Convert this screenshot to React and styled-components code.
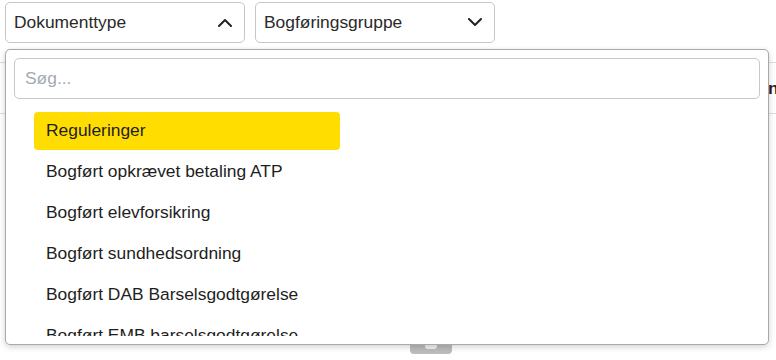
import React from "react";
import styled, { createGlobalStyle } from "styled-components";

const GlobalStyle = createGlobalStyle`
  body {
    margin: 0;
    background: #fff;
    font-family: "Liberation Sans", Arial, sans-serif;
    color: #222;
  }
`;

const Page = styled.div`
  position: relative;
  width: 776px;
  height: 360px;
  overflow: hidden;
`;

const Toolbar = styled.div`
  display: flex;
  gap: 10px;
  padding: 2px 5px 0;
`;

const Select = styled.div`
  box-sizing: border-box;
  width: 240px;
  height: 41px;
  border: 1px solid #c6c6c6;
  border-radius: 5px;
  display: flex;
  align-items: center;
  justify-content: space-between;
  padding: 0 12px 0 8px;
  font-size: 17.4px;
  color: #2a2a2a;
`;

const HeaderRow = styled.div`
  margin-top: 19px;
  height: 50px;
  border-top: 1px solid #dcdcdc;
  border-bottom: 1px solid #dcdcdc;
  display: flex;
  align-items: center;
  padding-left: 768px;
  font-size: 17.4px;
  font-weight: bold;
  white-space: nowrap;
`;

const ButtonRow = styled.div`
  margin-top: 197px;
  padding-left: 410px;
`;

const GreyButton = styled.div`
  width: 42px;
  height: 43px;
  background: #bcbcbc;
  border-radius: 4px;
  display: flex;
  align-items: flex-end;
  justify-content: center;
  padding-bottom: 5px;
  box-sizing: border-box;
`;

const Notch = styled.div`
  width: 12px;
  height: 10px;
  background: #f2f2f2;
  border-radius: 0 0 3px 3px;
`;

const Dropdown = styled.div`
  position: absolute;
  top: 49px;
  left: 5px;
  width: 764px;
  height: 296px;
  box-sizing: border-box;
  border: 1px solid #a9a9a9;
  border-radius: 5px;
  background: #fff;
  padding: 8px;
  box-shadow: 0 2px 6px rgba(0, 0, 0, 0.18);
`;

const Search = styled.input`
  box-sizing: border-box;
  width: 100%;
  height: 41px;
  border: 1px solid #c8c8c8;
  border-radius: 5px;
  padding: 0 10px 1px;
  font-family: inherit;
  font-size: 17.4px;
  color: #222;
  outline: none;
  &::placeholder {
    color: #a3aab6;
  }
`;

const List = styled.div`
  margin-top: 13px;
  padding-left: 20px;
  height: 224px;
  overflow: hidden;
`;

const Item = styled.div`
  box-sizing: border-box;
  width: 306px;
  height: 38px;
  margin-bottom: 3.2px;
  padding: 0 0 2px 12px;
  display: flex;
  align-items: center;
  border-radius: 4px;
  font-size: 17.4px;
  color: #1e1e1e;
  white-space: nowrap;
  background: ${(p) => (p.$active ? "#ffdd00" : "transparent")};
`;

const Chevron = ({ up }) => (
  <svg width="14" height="9" viewBox="0 0 14 9">
    <polyline
      points={up ? "1,8 7,2 13,8" : "1,1 7,7 13,1"}
      fill="none"
      stroke="#222"
      strokeWidth="2"
      strokeLinecap="round"
      strokeLinejoin="round"
    />
  </svg>
);

const items = [
  "Reguleringer",
  "Bogført opkrævet betaling ATP",
  "Bogført elevforsikring",
  "Bogført sundhedsordning",
  "Bogført DAB Barselsgodtgørelse",
  "Bogført EMB barselsgodtgørelse",
];

export default function App() {
  return (
    <>
      <GlobalStyle />
      <Page>
        <Toolbar>
          <Select>
            Dokumenttype
            <Chevron up />
          </Select>
          <Select>
            Bogføringsgruppe
            <Chevron />
          </Select>
        </Toolbar>
        <HeaderRow>nr.</HeaderRow>
        <ButtonRow>
          <GreyButton>
            <Notch />
          </GreyButton>
        </ButtonRow>
        <Dropdown>
          <Search placeholder="Søg..." />
          <List>
            {items.map((it, i) => (
              <Item key={it} $active={i === 0}>
                {it}
              </Item>
            ))}
          </List>
        </Dropdown>
      </Page>
    </>
  );
}
